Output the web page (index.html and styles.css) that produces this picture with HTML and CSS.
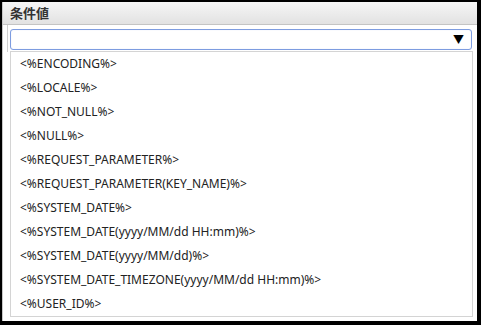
FILE: index.html
```html
<!DOCTYPE html>
<html lang="ja">
<head>
    <meta charset="UTF-8">
    <title>条件値</title>
    <link rel="stylesheet" href="styles.css">
</head>
<body>
    <div class="frame">
        <div class="header">条件値</div>
        <div class="row">
            <div class="cell">
                <div class="select">
                    <span class="arrow">▼</span>
                </div>
            </div>
        </div>

        <ul class="dropdown">
            <li>&lt;%ENCODING%&gt;</li>
            <li>&lt;%LOCALE%&gt;</li>
            <li>&lt;%NOT_NULL%&gt;</li>
            <li>&lt;%NULL%&gt;</li>
            <li>&lt;%REQUEST_PARAMETER%&gt;</li>
            <li>&lt;%REQUEST_PARAMETER(KEY_NAME)%&gt;</li>
            <li>&lt;%SYSTEM_DATE%&gt;</li>
            <li>&lt;%SYSTEM_DATE(yyyy/MM/dd HH:mm)%&gt;</li>
            <li>&lt;%SYSTEM_DATE(yyyy/MM/dd)%&gt;</li>
            <li>&lt;%SYSTEM_DATE_TIMEZONE(yyyy/MM/dd HH:mm)%&gt;</li>
            <li>&lt;%USER_ID%&gt;</li>
        </ul>
    </div>
</body>
</html>
```

FILE: styles.css
```css
body {
    margin: 0;
    background-color: #000;
    font-family: "Noto Sans", "Noto Sans CJK JP", sans-serif;
}
.frame {
    position: relative;
    margin: 2px 4px 4px 2px;
    height: 319px;
    background-color: #fff;
    border-left: 1px solid #c8c8c8;
}
.header {
    height: 22px;
    line-height: 22px;
    padding-left: 7px;
    font-size: 13px;
    font-weight: bold;
    color: #333;
    background: linear-gradient(#f6f6f6, #e2e2e2);
    border-bottom: 1px solid #c4c4c4;
}
.row {
    height: 27px;
}
.cell {
    height: 100%;
    margin-left: 4px;
    padding: 4px 0 0 2px;
    border-left: 1px solid #d0d0d0;
    box-sizing: border-box;
}
.select {
    display: flex;
    justify-content: flex-end;
    align-items: center;
    width: 462px;
    height: 21px;
    box-sizing: border-box;
    padding-right: 7px;
    border: 1px solid #7d9ce0;
    border-radius: 3px;
    box-shadow: inset 0 0 1px #c5d4f3;
}
.arrow {
    font-size: 11px;
    color: #000;
    line-height: 1;
}
.dropdown {
    position: absolute;
    top: 49px;
    left: 7px;
    width: 461px;
    margin: 0;
    padding: 0;
    list-style: none;
    background-color: #fff;
    border: 1px solid #d4d4d4;
}
.dropdown li {
    height: 24px;
    line-height: 24px;
    padding-left: 9px;
    font-size: 12px;
    color: #222;
    white-space: nowrap;
}
```
